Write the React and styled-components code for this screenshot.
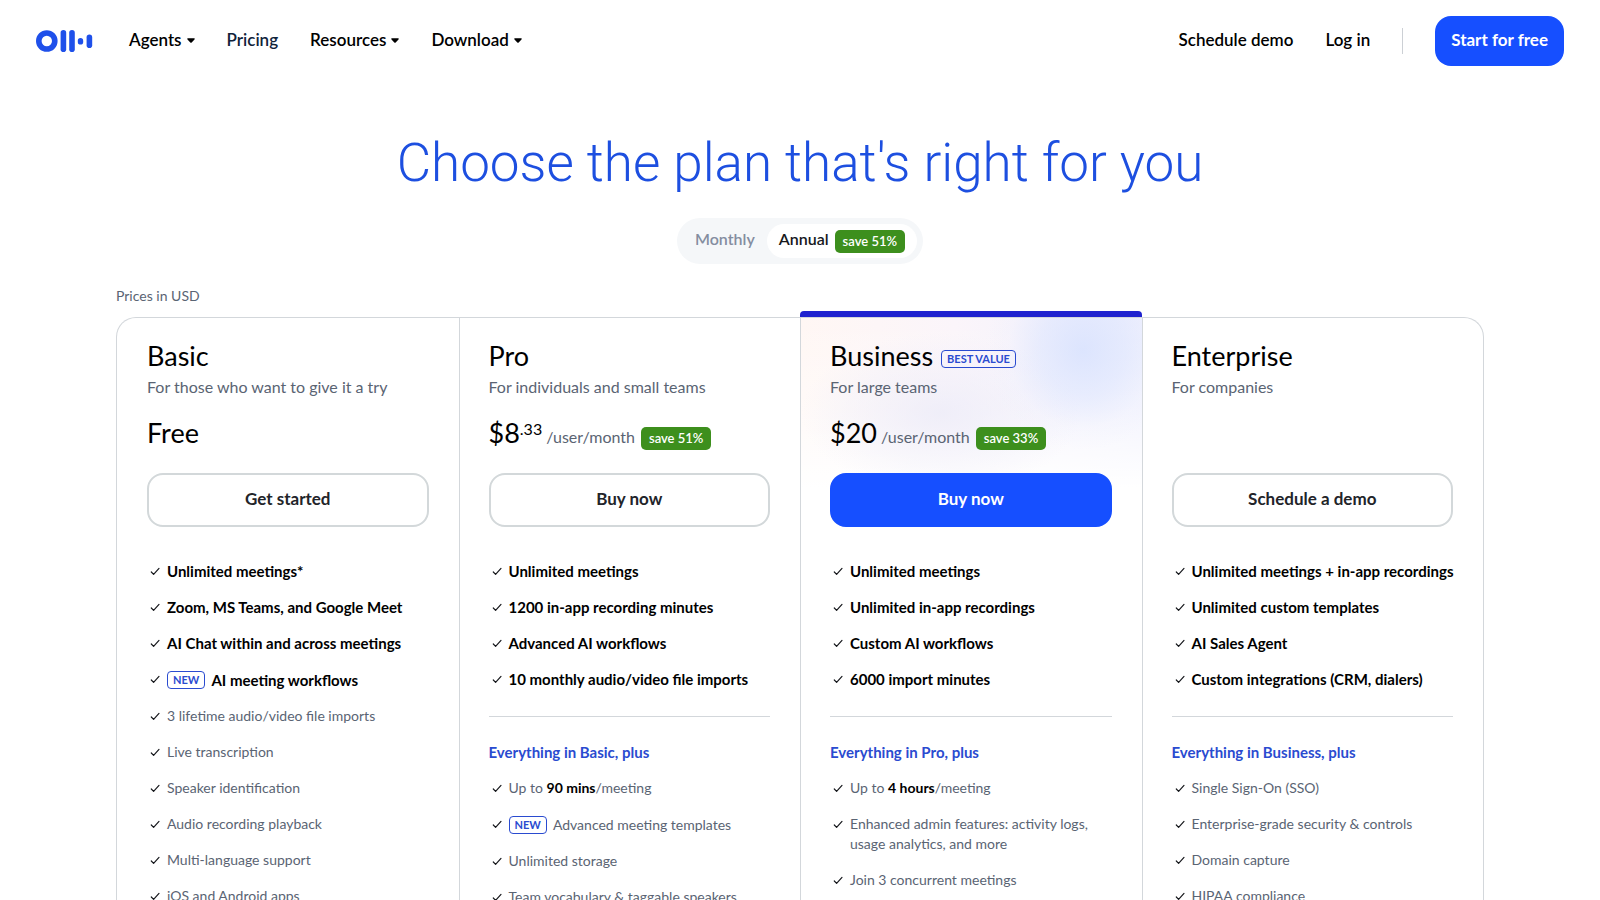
import React from "react";
import styled, { createGlobalStyle, css } from "styled-components";

const c = {
  blue: "#164fff",
  logo: "#1f50ea",
  heading: "#1d4fe0",
  accent: "#2a4bd0",
  bar: "#1f22cf",
  green: "#3d8f1d",
  ink: "#000",
  soft: "#5a6473",
  line: "#d3d7db",
};

const GlobalStyle = createGlobalStyle`
  *, *::before, *::after { box-sizing: border-box; }
  body { margin: 0; background: #fff; color: ${c.ink}; font-family: Lato, "Liberation Sans", sans-serif; }
  h1, h2, h3, p, ul { margin: 0; padding: 0; font-weight: 400; }
  ul { list-style: none; }
  button { font-family: inherit; cursor: pointer; }
`;

const Header = styled.header`
  display: flex;
  align-items: center;
  justify-content: space-between;
  padding: 16px 36px;
`;
const Nav = styled.nav`
  display: flex;
  align-items: center;
  gap: 32px;
`;
const LogoLink = styled.a`
  display: flex;
  margin-right: 4px;
`;
const navText = css`
  padding: 0 0 2px;
  font-size: 17px;
  line-height: 24px;
  font-weight: 600;
  color: ${(p) => (p.$active ? "#10233a" : c.ink)};
`;
const NavLink = styled.a`
  ${navText}
  text-decoration: none;
`;
const NavButton = styled.button`
  ${navText}
  display: flex;
  align-items: center;
  gap: 5px;
  border: 0;
  background: none;
`;
const Separator = styled.span`
  width: 1px;
  height: 26px;
  background: #ccd0d5;
`;
const StartLink = styled.a`
  display: flex;
  align-items: center;
  height: 50px;
  padding: 0 16px 2px;
  border-radius: 16px;
  background: ${c.blue};
  color: #fff;
  font-size: 17px;
  line-height: 24px;
  font-weight: 700;
  text-decoration: none;
`;

const Main = styled.main`
  display: flex;
  flex-direction: column;
  align-items: center;
  padding: 49px 116px 0;
`;
const Title = styled.h1`
  font-family: Roboto, "Liberation Sans", sans-serif;
  font-size: 53px;
  line-height: 64px;
  font-weight: 300;
  color: ${c.heading};
  text-align: center;
`;
const Toggle = styled.div`
  display: flex;
  align-items: center;
  height: 46px;
  margin: 23px 0 22px;
  padding: 0 6px;
  border-radius: 23px;
  background: #f5f7f9;
`;
const ToggleOption = styled.label`
  display: flex;
  align-items: center;
  gap: 6px;
  height: 34px;
  padding: 0 12px;
  border-radius: 17px;
  font-size: 16px;
  line-height: 24px;
  color: #848da0;
  cursor: pointer;
  font-weight: 600;
  &:has(input:checked) {
    background: #fff;
    color: #16181c;
  }
`;
const ToggleText = styled.span`
  padding-bottom: 4px;
`;
const HiddenRadio = styled.input`
  position: absolute;
  opacity: 0;
  pointer-events: none;
`;
const SaveBadge = styled.span`
  padding: 0 8px;
  border-radius: 5px;
  background: ${c.green};
  color: #fff;
  font-size: 13px;
  line-height: 23px;
  font-weight: 600;
`;
const CurrencyNote = styled.p`
  align-self: flex-start;
  margin-bottom: 11px;
  font-size: 14px;
  line-height: 20px;
  color: ${c.soft};
`;

const Plans = styled.div`
  display: grid;
  grid-template-columns: repeat(4, minmax(0, 1fr));
  width: 100%;
  border: 1px solid ${c.line};
  border-bottom: 0;
  border-radius: 20px 20px 0 0;
`;
const Plan = styled.section`
  position: relative;
  padding: 22px 30px 20px 29px;
  border-left: 1px solid ${c.line};
  &:first-child {
    padding-left: 30px;
    border-left: 0;
  }
  ${(p) =>
    p.$featured &&
    css`
      background:
        radial-gradient(ellipse 96px 100px at 282px 32px, rgba(216, 226, 254, 0.85), rgba(222, 230, 254, 0.6) 45%, rgba(236, 239, 254, 0.2) 78%, rgba(242, 243, 254, 0)),
        radial-gradient(ellipse 140px 80px at 140px 95px, rgba(236, 235, 248, 0.8), rgba(244, 243, 252, 0)),
        linear-gradient(to bottom, rgba(255, 255, 255, 0) 0, rgba(255, 255, 255, 0.35) 90px, #fff 170px),
        linear-gradient(to right, #fff7f4, #fbf5fa 45%, #eeeffd);
      &::before {
        content: "";
        position: absolute;
        top: -7px;
        left: -1px;
        right: 0;
        height: 6px;
        border-radius: 4px 4px 0 0;
        background: ${c.bar};
      }
    `}
`;
const Tag = styled.span`
  display: inline-block;
  padding: 0 5px;
  border: 1px solid ${c.accent};
  border-radius: 4px;
  color: ${c.accent};
  font-size: 11px;
  line-height: 16px;
  font-weight: 700;
`;
const PlanHead = styled.div`
  display: flex;
  align-items: center;
  gap: 8px;
  height: 32px;
  ${Tag} {
    margin-top: 5px;
  }
`;
const PlanName = styled.h2`
  font-size: 27px;
  line-height: 32px;
`;
const Tagline = styled.p`
  margin-top: 3px;
  font-size: 16px;
  line-height: 24px;
  color: ${c.soft};
`;
const PriceRow = styled.div`
  display: flex;
  align-items: baseline;
  height: 32px;
  margin: 18px 0 24px;
`;
const Price = styled.strong`
  font-size: 27px;
  line-height: 32px;
  font-weight: 400;
`;
const Cents = styled.sup`
  align-self: flex-start;
  font-size: 16px;
  line-height: 24px;
`;
const Period = styled.span`
  margin: 0 6px 0 4px;
  font-size: 16px;
  line-height: 24px;
  color: ${c.soft};
`;
const PlanButton = styled.button`
  display: block;
  width: 100%;
  height: 54px;
  padding: 0 0 2px;
  border: 2px solid ${(p) => (p.$primary ? c.blue : "#d3d8da")};
  border-radius: 16px;
  background: ${(p) => (p.$primary ? c.blue : "#fff")};
  color: ${(p) => (p.$primary ? "#fff" : "#222429")};
  font-size: 17px;
  line-height: 24px;
  font-weight: 700;
`;
const Features = styled.ul`
  display: flex;
  flex-direction: column;
  gap: 16px;
  margin-top: ${(p) => (p.$included ? "16px" : "34px")};
`;
const Feature = styled.li`
  display: flex;
  align-items: flex-start;
  gap: 4px;
  font-size: ${(p) => (p.$strong ? "15px" : "14px")};
  line-height: 20px;
  font-weight: ${(p) => (p.$strong ? 700 : 400)};
  color: ${(p) => (p.$strong ? c.ink : c.soft)};
  white-space: ${(p) => (p.$strong ? "nowrap" : "normal")};
  b {
    color: ${c.ink};
    font-weight: 700;
  }
`;
const FeatureText = styled.span`
  display: flex;
  align-items: center;
  gap: 6px;
  padding-top: ${(p) => (p.$tagged ? "1px" : "0")};
`;
const CheckIcon = styled.svg`
  flex: none;
  width: 16px;
  height: 20px;
`;
const Divider = styled.hr`
  height: 1px;
  margin: 27px 0 25px;
  border: 0;
  background: ${c.line};
`;
const PlusTitle = styled.h3`
  font-size: 15px;
  line-height: 20px;
  font-weight: 700;
  color: ${c.accent};
`;

const Logo = () => (
  <svg width="57" height="22" viewBox="0 0 57 22" fill={c.logo} role="img" aria-label="Otter home">
    <circle cx="10.8" cy="11" r="8" fill="none" stroke={c.logo} strokeWidth="5.6" />
    <rect x="24.6" y="0" width="5.6" height="22" rx="2.8" />
    <rect x="33.2" y="0" width="5.6" height="22" rx="2.8" />
    <rect x="41.8" y="8" width="5.4" height="6.6" rx="2.7" />
    <rect x="50.6" y="4.6" width="5.6" height="13.4" rx="2.8" />
  </svg>
);

const Caret = () => (
  <svg width="8" height="5" viewBox="0 0 8 5" aria-hidden="true">
    <path d="M1 .2h6c.7 0 1 .7.500 1.200L4.700 4.400c-.4.4-1 .4-1.400 0L.5 1.400C0 .9.300.2 1 .2z" />
  </svg>
);

const Check = () => (
  <CheckIcon viewBox="0 0 16 20" aria-hidden="true">
    <path d="M4.300 11l2.300 2.300L12 7.400" fill="none" stroke="#16181c" strokeWidth="1.2" strokeLinecap="round" strokeLinejoin="round" />
  </CheckIcon>
);

const FeatureItem = ({ strong, isNew, children }) => (
  <Feature $strong={strong}>
    <Check />
    <FeatureText $tagged={isNew}>
      {isNew && <Tag>NEW</Tag>}
      <span>{children}</span>
    </FeatureText>
  </Feature>
);

const plans = [
  {
    name: "Basic",
    tagline: "For those who want to give it a try",
    price: "Free",
    cta: "Get started",
    top: [
      { text: "Unlimited meetings*" },
      { text: "Zoom, MS Teams, and Google Meet" },
      { text: "AI Chat within and across meetings" },
      { text: "AI meeting workflows", isNew: true },
      { text: "3 lifetime audio/video file imports", plain: true },
      { text: "Live transcription", plain: true },
      { text: "Speaker identification", plain: true },
      { text: "Audio recording playback", plain: true },
      { text: "Multi-language support", plain: true },
      { text: "iOS and Android apps", plain: true },
    ],
  },
  {
    name: "Pro",
    tagline: "For individuals and small teams",
    price: "$8",
    cents: ".33",
    save: "save 51%",
    cta: "Buy now",
    top: [
      { text: "Unlimited meetings" },
      { text: "1200 in-app recording minutes" },
      { text: "Advanced AI workflows" },
      { text: "10 monthly audio/video file imports" },
    ],
    plus: "Everything in Basic, plus",
    included: [
      { text: <>Up to <b>90 mins</b>/meeting</> },
      { text: "Advanced meeting templates", isNew: true },
      { text: "Unlimited storage" },
      { text: "Team vocabulary & taggable speakers" },
    ],
  },
  {
    name: "Business",
    tag: "BEST VALUE",
    featured: true,
    tagline: "For large teams",
    price: "$20",
    save: "save 33%",
    cta: "Buy now",
    top: [
      { text: "Unlimited meetings" },
      { text: "Unlimited in-app recordings" },
      { text: "Custom AI workflows" },
      { text: "6000 import minutes" },
    ],
    plus: "Everything in Pro, plus",
    included: [
      { text: <>Up to <b>4 hours</b>/meeting</> },
      { text: "Enhanced admin features: activity logs, usage analytics, and more" },
      { text: "Join 3 concurrent meetings" },
    ],
  },
  {
    name: "Enterprise",
    tagline: "For companies",
    cta: "Schedule a demo",
    top: [
      { text: "Unlimited meetings + in-app recordings" },
      { text: "Unlimited custom templates" },
      { text: "AI Sales Agent" },
      { text: "Custom integrations (CRM, dialers)" },
    ],
    plus: "Everything in Business, plus",
    included: [
      { text: "Single Sign-On (SSO)" },
      { text: "Enterprise-grade security & controls" },
      { text: "Domain capture" },
      { text: "HIPAA compliance" },
    ],
  },
];

const PlanColumn = ({ plan }) => (
  <Plan $featured={plan.featured}>
    <PlanHead>
      <PlanName>{plan.name}</PlanName>
      {plan.tag && <Tag>{plan.tag}</Tag>}
    </PlanHead>
    <Tagline>{plan.tagline}</Tagline>
    <PriceRow>
      {plan.price && <Price>{plan.price}</Price>}
      {plan.cents && <Cents>{plan.cents}</Cents>}
      {plan.save && (
        <>
          <Period>/user/month</Period>
          <SaveBadge>{plan.save}</SaveBadge>
        </>
      )}
    </PriceRow>
    <PlanButton type="button" $primary={plan.featured}>{plan.cta}</PlanButton>
    <Features>
      {plan.top.map((f) => (
        <FeatureItem key={f.text} strong={!f.plain} isNew={f.isNew}>{f.text}</FeatureItem>
      ))}
    </Features>
    {plan.plus && (
      <>
        <Divider />
        <PlusTitle>{plan.plus}</PlusTitle>
        <Features $included>
          {plan.included.map((f, i) => (
            <FeatureItem key={i} isNew={f.isNew}>{f.text}</FeatureItem>
          ))}
        </Features>
      </>
    )}
  </Plan>
);

export default function App() {
  return (
    <>
      <GlobalStyle />
      <Header>
        <Nav aria-label="Main">
          <LogoLink href="#"><Logo /></LogoLink>
          <NavButton type="button">Agents <Caret /></NavButton>
          <NavLink href="#pricing" $active>Pricing</NavLink>
          <NavButton type="button">Resources <Caret /></NavButton>
          <NavButton type="button">Download <Caret /></NavButton>
        </Nav>
        <Nav aria-label="Account">
          <NavLink href="#demo">Schedule demo</NavLink>
          <NavLink href="#login">Log in</NavLink>
          <Separator />
          <StartLink href="#start">Start for free</StartLink>
        </Nav>
      </Header>
      <Main>
        <Title>Choose the plan that's right for you</Title>
        <Toggle role="radiogroup" aria-label="Billing period">
          <ToggleOption>
            <HiddenRadio type="radio" name="billing" value="monthly" />
            <ToggleText>Monthly</ToggleText>
          </ToggleOption>
          <ToggleOption>
            <HiddenRadio type="radio" name="billing" value="annual" defaultChecked />
            <ToggleText>Annual</ToggleText>
            <SaveBadge>save 51%</SaveBadge>
          </ToggleOption>
        </Toggle>
        <CurrencyNote>Prices in USD</CurrencyNote>
        <Plans>
          {plans.map((plan) => <PlanColumn key={plan.name} plan={plan} />)}
        </Plans>
      </Main>
    </>
  );
}
